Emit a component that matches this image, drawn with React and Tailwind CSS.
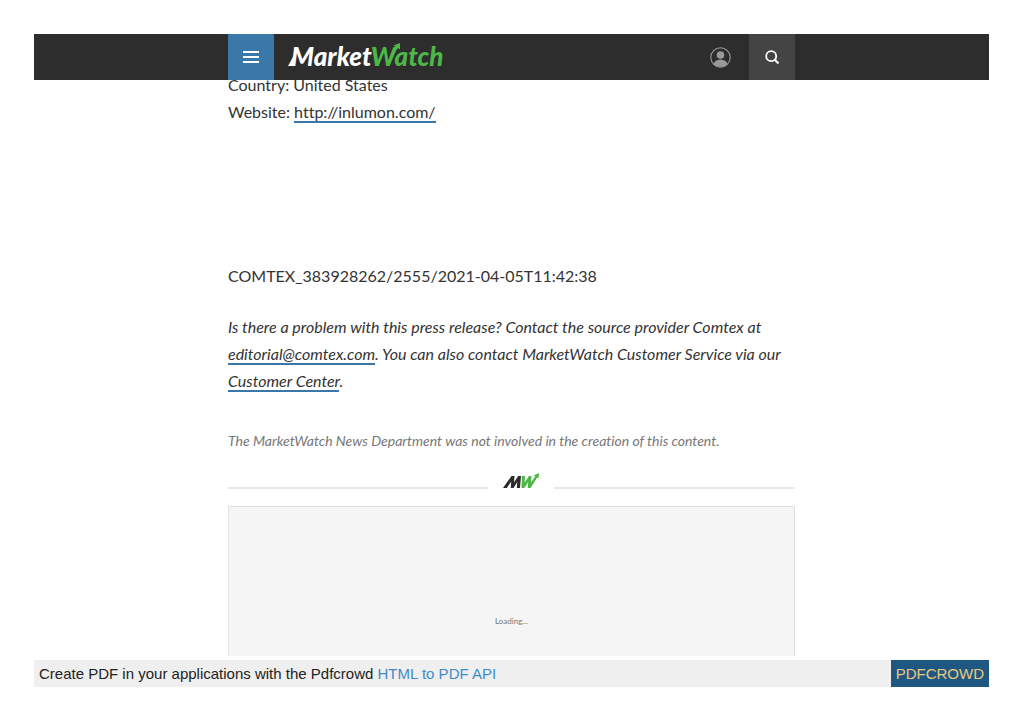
import React from 'react';

const RELEASE_FIELDS = [
  { label: 'Country', value: 'United States' },
  { label: 'Website', value: 'http://inlumon.com/', href: 'http://inlumon.com/' },
];

const LINK_CLASS = 'border-b-2 border-[#3a78a9] hover:text-[#3a78a9]';

function Wordmark() {
  return (
    <svg width="162" height="36" viewBox="0 0 162 36" role="img" aria-label="MarketWatch">
      <path d="M0 27 L7.500 13.500 L6 27 Z" fill="#fff" />
      <text x="3" y="27" className="font-[Lato,sans-serif] text-[26px] font-black italic" fill="#fff">
        Market<tspan fill="#4db748">Watch</tspan>
      </text>
      <path d="M104 12 L107.500 7.500 L105.500 6.500 L112 4 L112 10.500 L110 9 L107 13 Z" fill="#4db748" />
    </svg>
  );
}

function Monogram() {
  return (
    <svg width="36" height="16" viewBox="0 0 36 16" role="img" aria-label="MW" fill="none" strokeWidth="3">
      <path d="M0 15 L8.500 3 H11.500 L11 9.500 L15.200 3 H18 L17 15 H13.800 L14.300 9 L10.500 15 H7.800 L8.200 8.500 L3.800 15 Z" fill="#2b2b2b" />
      <path d="M19 3 H22 L21.600 9.500 L26 3 H28.500 L28 9.500 L32.300 3.300 L30.500 2.500 L36 0 L35.500 5.500 L34.200 4.500 L27.500 15 H24.800 L25.200 9 L21.300 15 H18.500 Z" fill="#4db748" />
    </svg>
  );
}

function Header() {
  return (
    <header className="relative z-10 bg-[#2d2d2d]">
      <div className="mx-auto flex h-[46px] max-w-[567px] items-center">
        <button type="button" aria-label="Menu" className="flex h-full w-[46px] items-center justify-center bg-[#3a78a9]">
          <svg width="16" height="12" viewBox="0 0 16 12" stroke="#fff" strokeWidth="1.8">
            <path d="M0 1 H16 M0 6 H16 M0 11 H16" />
          </svg>
        </button>
        <a href="#" className="ml-[14px]">
          <Wordmark />
        </a>
        <button type="button" aria-label="Account" className="mr-[18px] ml-auto">
          <svg width="21" height="21" viewBox="0 0 21 21">
            <defs>
              <clipPath id="avatar">
                <circle cx="10.5" cy="10.5" r="9.5" />
              </clipPath>
            </defs>
            <circle cx="10.5" cy="10.5" r="9.7" fill="none" stroke="#999" strokeWidth="1.1" />
            <g clipPath="url(#avatar)" fill="#999">
              <circle cx="10.5" cy="8" r="3.8" />
              <ellipse cx="10.5" cy="18" rx="7" ry="5.500" />
            </g>
          </svg>
        </button>
        <button type="button" aria-label="Search" className="flex h-full w-[46px] items-center justify-center bg-[#444]">
          <svg width="14" height="14" viewBox="0 0 14 14" fill="none" stroke="#fff" strokeLinecap="round">
            <circle cx="6.200" cy="6.200" r="5" strokeWidth="1.8" />
            <path d="M10 10 L12.800 12.800" strokeWidth="2.200" />
          </svg>
        </button>
      </div>
    </header>
  );
}

export default function App() {
  return (
    <div className="bg-white p-[34px] font-[Lato,sans-serif] text-[#333] [font-variant-ligatures:none]">
      <Header />

      <main className="mx-auto -mt-[9px] max-w-[567px] text-[16px] leading-[27px]">
        {RELEASE_FIELDS.map((field) => (
          <p key={field.label}>
            {field.label}:{' '}
            {field.href ? (
              <a href={field.href} className={LINK_CLASS}>
                {field.value}
              </a>
            ) : (
              field.value
            )}
          </p>
        ))}

        <p className="mt-[137px]">COMTEX_383928262/2555/2021-04-05T11:42:38</p>

        <p className="mt-6 italic">
          Is there a problem with this press release? Contact the source provider Comtex at{' '}
          <a href="mailto:editorial@comtex.com" className={LINK_CLASS}>
            editorial@comtex.com
          </a>
          . You can also contact MarketWatch Customer Service via our{' '}
          <a href="#" className={LINK_CLASS}>
            Customer Center
          </a>
          .
        </p>

        <p className="mt-[35px] text-[14px] leading-6 text-[#777] italic">
          The MarketWatch News Department was not involved in the creation of this content.
        </p>

        <div className="mt-5 grid h-4 grid-cols-[260fr_66px_241fr] items-end">
          <div className="h-[2px] bg-[#e8e8e8]" />
          <div className="flex justify-center">
            <Monogram />
          </div>
          <div className="h-[2px] bg-[#e8e8e8]" />
        </div>

        {/* ad slot, cut off by the page break */}
        <div className="mt-[17px] flex h-[150px] justify-center border border-b-0 border-[#e0e0e0] bg-[#f5f5f5] pt-[108px] text-[8px] leading-3 text-[#777]">
          Loading...
        </div>
      </main>

      <footer className="mt-1 flex items-center justify-between bg-[#efefef] font-['Liberation_Sans',Arial,sans-serif] text-[15px] leading-[27px] text-[#222]">
        <p className="pl-[5px]">
          Create PDF in your applications with the Pdfcrowd{' '}
          <a href="https://pdfcrowd.com/doc/api/" className="text-[#428bca]">
            HTML to PDF API
          </a>
        </p>
        <a href="https://pdfcrowd.com/" className="bg-[#1f5783] px-[5px] text-[#ecc97c]">
          PDFCROWD
        </a>
      </footer>
    </div>
  );
}
